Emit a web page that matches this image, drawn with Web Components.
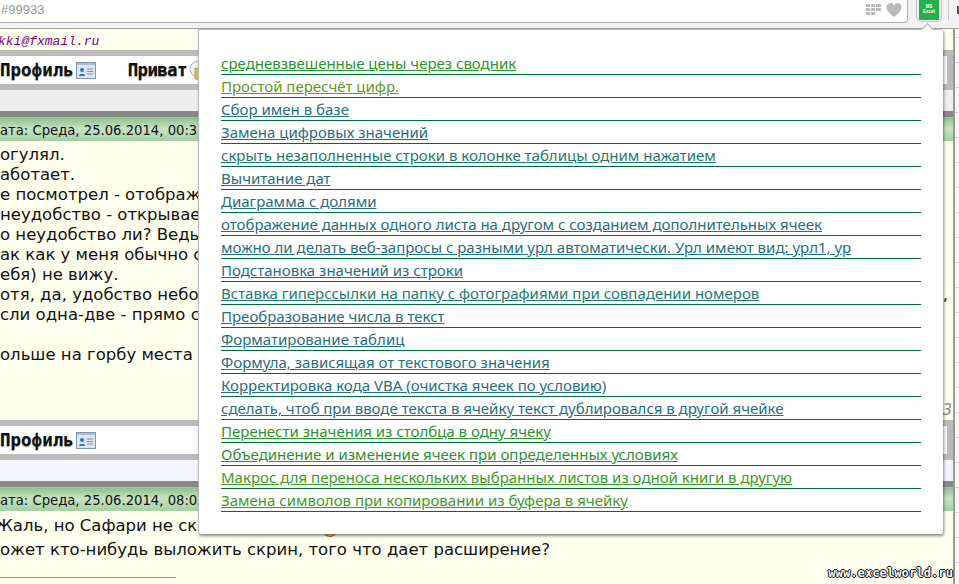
<!DOCTYPE html>
<html>
<head>
<meta charset="utf-8">
<style>
html, body { margin: 0; padding: 0; height: 100%; overflow: hidden; background: #ffffee; }
body { font-family: "DejaVu Sans", sans-serif; position: relative; width: 959px; height: 584px; }
</style>
</head>
<body>
<browser-bar></browser-bar>
<forum-page>
    <span slot="mail">kki@fxmail.ru</span>
    <forum-post date="ата: Среда, 25.06.2014, 00:37" tint="#eeeeee" priv body-height="279" pad="4" line="20">
        <post-line>огулял.</post-line>
        <post-line>аботает.</post-line>
        <post-line>е посмотрел - отображ</post-line>
        <post-line>неудобство - открывает</post-line>
        <post-line>о неудобство ли? Ведь</post-line>
        <post-line>ак как у меня обычно с</post-line>
        <post-line>ебя) не вижу.</post-line>
        <post-line tail=",">отя, да, удобство неболь</post-line>
        <post-line>сли одна-две - прямо с</post-line>
        <post-line>&nbsp;</post-line>
        <post-line>ольше на горбу места</post-line>
        <post-note>13</post-note>
    </forum-post>
    <forum-post date="ата: Среда, 25.06.2014, 08:02" tint="#f3f6fc" body-height="80" pad="3" line="24">
        <post-line style="margin-left:-5px">Жаль, но Сафари не ска</post-line>
        <post-line>ожет кто-нибудь выложить скрин, того что дает расширение?</post-line>
        <post-rule></post-rule>
    </forum-post>
</forum-page>
<post-smiley></post-smiley>
<popup-list>
    <a style="color:#2b9430">средневзвешенные цены через сводник</a>
    <a style="color:#5f9a20">Простой пересчёт цифр.</a>
    <a style="color:#256f80">Сбор имен в базе</a>
    <a style="color:#256f80">Замена цифровых значений</a>
    <a style="color:#1f7a70">скрыть незаполненные строки в колонке таблицы одним нажатием</a>
    <a style="color:#256f80">Вычитание дат</a>
    <a style="color:#256f80">Диаграмма с долями</a>
    <a style="color:#256f80">отображение данных одного листа на другом с созданием дополнительных ячеек</a>
    <a style="color:#256f80">можно ли делать веб-запросы с разными урл автоматически. Урл имеют вид: урл1, ур</a>
    <a style="color:#256f80">Подстановка значений из строки</a>
    <a style="color:#1f7a70">Вставка гиперссылки на папку с фотографиями при совпадении номеров</a>
    <a style="color:#256f80">Преобразование числа в текст</a>
    <a style="color:#256f80">Форматирование таблиц</a>
    <a style="color:#256f80">Формула, зависящая от текстового значения</a>
    <a style="color:#256f80">Корректировка кода VBA (очистка ячеек по условию)</a>
    <a style="color:#256f80">сделать, чтоб при вводе текста в ячейку текст дублировался в другой ячейке</a>
    <a style="color:#2b9430">Перенести значения из столбца в одну ячеку</a>
    <a style="color:#2f9030">Объединение и изменение ячеек при определенных условиях</a>
    <a style="color:#3f9a25">Макрос для переноса нескольких выбранных листов из одной книги в другую</a>
    <a style="color:#3f9a25">Замена символов при копировании из буфера в ячейку</a>
</popup-list>
<water-mark>www.excelworld.ru</water-mark>
<script>
class BrowserBar extends HTMLElement {
    constructor() {
        super();
        this.attachShadow({ mode: "open" });
        this.shadowRoot.innerHTML = `
            <style>
                :host { display: flex; height: 29px; background: #f2f2f2; box-sizing: border-box; border-bottom: 1px solid #a0a0a0; }
                .url {
                    width: 908px; height: 23px; background: #fff; box-sizing: border-box;
                    border: 1px solid #b0b0b0; border-width: 0 1px 1px 0; border-bottom-right-radius: 4px;
                    display: flex; align-items: center; padding: 0 5px 3px 1px; gap: 5px;
                    font: 13px "Liberation Sans", sans-serif; color: #999;
                }
                .addr { flex: 1; }
                .ext { margin-left: 8px; width: 26px; height: 22px; box-sizing: border-box; border: 1px solid #c4c4c4; border-top: 0; border-radius: 0 0 5px 5px; padding: 0 2px 1px; }
                .tile { background: #22b14c; height: 20px; color: #fff; font: bold 4.500px/5px "Liberation Sans", sans-serif; text-align: center; padding-top: 4px; box-sizing: border-box; }
                .sep { width: 1px; height: 20px; margin-left: 6px; background: #ccc; }
                .edge { width: 2px; height: 8px; margin: 6px 0 0 8px; background: #555; }
            </style>
            <div class="url">
                <span class="addr">#99933</span>
                <svg width="15" height="12" viewBox="0 0 15 12" fill="#bbb"><path d="M0 0h4v3H0zM5 0h4v3H5zM10 0h5v3h-5zM0 4h4v3H0zM5 4h4v3H5zM10 4h5v3h-5zM0 8h4v3H0zM5 8h4v3H5z"/></svg>
                <svg width="16" height="14" viewBox="0 0 16 15" fill="#bbb"><path d="M8 15C3 11 0 8 0 4.500A4.200 4.200 0 0 1 8 2.500 4.200 4.200 0 0 1 16 4.500C16 8 13 11 8 15z"/></svg>
            </div>
            <div class="ext"><div class="tile">MS<br>Excel</div></div>
            <div class="sep"></div>
            <div class="edge"></div>
        `;
    }
}

class ForumPage extends HTMLElement {
    constructor() {
        super();
        this.attachShadow({ mode: "open" });
        this.shadowRoot.innerHTML = `
            <style>
                :host { display: flex; height: 555px; overflow: hidden; }
                .main { width: 953px; flex: none; overflow: hidden; border-right: 2px solid #999; }
                .ticks { flex: 1; background: repeating-linear-gradient(#f7f7f7 0 8px, #d8d8d8 8px 9px, #f7f7f7 9px 25px); }
                .mail { height: 21px; padding-top: 6px; box-sizing: border-box; font: italic 13px/14px "Liberation Mono", monospace; color: #800080; text-indent: -2px; }
            </style>
            <div class="main">
                <div class="mail"><slot name="mail"></slot></div>
                <slot></slot>
            </div>
            <div class="ticks"></div>
        `;
    }
}

const CARD_ICON = `<svg width="20" height="17" viewBox="0 0 20 17"><rect x=".5" y=".5" width="19" height="16" fill="#dde6f0" stroke="#8096b0"/><rect x="1" y="1" width="18" height="2" fill="#a9bcd4"/><circle cx="6" cy="8" r="2" fill="#3b6fb5"/><path d="M3 14c0-3 6-3 6 0z" fill="#3b6fb5"/><path d="M11 7h6M11 9.500h6M11 12h6" stroke="#7f8fa5"/></svg>`;
const MAIL_ICON = `<svg width="19" height="20" viewBox="0 0 19 20"><circle cx="9" cy="9" r="8" fill="#eef2f5" stroke="#a9b2b8"/><path d="M6 8l10 3v8H6z" fill="#e8c35a" stroke="#b59a45"/></svg>`;

class ForumPost extends HTMLElement {
    constructor() {
        super();
        this.attachShadow({ mode: "open" });
        const date = this.getAttribute("date") || "";
        const tint = this.getAttribute("tint") || "#eee";
        const height = this.getAttribute("body-height") || "120";
        const pad = this.getAttribute("pad") || "4";
        const line = this.getAttribute("line") || "20";
        const priv = this.hasAttribute("priv") ? `<b class="priv">Приват</b>${MAIL_ICON}` : "";
        this.shadowRoot.innerHTML = `
            <style>
                :host { display: block; }
                .tools { background: #bbb; padding: 6px 6px 6px 0; }
                .row { height: 28px; background: #fff; display: flex; align-items: center; gap: 2px; font: bold 17.500px "DejaVu Sans Mono", monospace; color: #111; text-shadow: 0 1px 1px #999; }
                .priv { margin-left: 30px; letter-spacing: -.7px; }
                .tint { height: 21px; background: ${tint}; border-bottom: 6px solid #888; }
                .date { height: 24px; background: linear-gradient(#8fc08f, #c6e3c2 45%, #a4cfa4); font: 13.200px/25px "DejaVu Sans", sans-serif; color: #111; box-sizing: border-box; border-top: 1px solid #9bc59b; white-space: nowrap; overflow: hidden; }
                .body { height: ${height}px; box-sizing: border-box; padding-top: ${pad}px; font: 16.500px/${line}px "DejaVu Sans", sans-serif; color: #111; white-space: nowrap; }
            </style>
            <div class="tools"><div class="row"><b>Профиль</b>${CARD_ICON}${priv}</div></div>
            <div class="tint"></div>
            <div class="date">${date}</div>
            <div class="body"><slot></slot></div>
        `;
    }
}

class PostLine extends HTMLElement {
    constructor() {
        super();
        this.attachShadow({ mode: "open" });
        const tail = this.getAttribute("tail") || "";
        this.shadowRoot.innerHTML = `
            <style>
                :host { display: flex; justify-content: space-between; padding-right: 5px; }
            </style>
            <span><slot></slot></span><span>${tail}</span>
        `;
    }
}

class PostNote extends HTMLElement {
    constructor() {
        super();
        this.attachShadow({ mode: "open" });
        this.shadowRoot.innerHTML = `
            <style>
                :host { display: block; margin-top: 35px; padding-right: 1px; text-align: right; font: italic 15px/20px "DejaVu Sans", sans-serif; color: #888; }
            </style>
            <slot></slot>
        `;
    }
}

class PostRule extends HTMLElement {
    constructor() {
        super();
        this.attachShadow({ mode: "open" });
        this.shadowRoot.innerHTML = `
            <style>
                :host { display: block; width: 176px; margin-top: 15px; height: 1px; background: #999; }
            </style>
        `;
    }
}

// smiley of the second post, mostly hidden under the popup
class PostSmiley extends HTMLElement {
    constructor() {
        super();
        this.attachShadow({ mode: "open" });
        this.shadowRoot.innerHTML = `
            <style>
                :host { display: block; position: absolute; left: 322px; top: 521px; width: 16px; height: 16px; box-sizing: border-box; border-radius: 50%; background: #f0c850; border: 1px solid #8a6a20; }
            </style>
        `;
    }
}

class PopupList extends HTMLElement {
    constructor() {
        super();
        this.attachShadow({ mode: "open" });
        this.shadowRoot.innerHTML = `
            <style>
                :host { display: block; position: absolute; left: 198px; top: 29px; width: 745px; height: 505px; box-sizing: border-box; background: #fff; padding: 22px 22px 0; border: solid #bbb; border-width: 1px 0 0 1px; border-radius: 2px; box-shadow: 1px 2px 3px rgba(0,0,0,.45); }
                ::slotted(a) { display: block; height: 23px; box-sizing: border-box; border-bottom: 1px solid #006a3a; font: 15px/22px "Noto Sans", sans-serif; text-decoration: underline; white-space: nowrap; overflow: hidden; }
                .nub { position: absolute; right: 11px; top: -5px; width: 8px; height: 8px; background: #fff; transform: rotate(45deg); border: solid #aaa; border-width: 1px 0 0 1px; }
            </style>
            <div class="nub"></div>
            <slot></slot>
        `;
    }
}

class WaterMark extends HTMLElement {
    constructor() {
        super();
        this.attachShadow({ mode: "open" });
        this.shadowRoot.innerHTML = `
            <style>
                :host { display: block; position: absolute; right: 6px; bottom: 4px; font: bold 12.200px "DejaVu Sans Mono", monospace; color: #fff; text-shadow: 1px 0 #000, -1px 0 #000, 0 1px #000, 0 -1px #000; }
            </style>
            <slot></slot>
        `;
    }
}

customElements.define("browser-bar", BrowserBar);
customElements.define("forum-page", ForumPage);
customElements.define("forum-post", ForumPost);
customElements.define("post-line", PostLine);
customElements.define("post-note", PostNote);
customElements.define("post-rule", PostRule);
customElements.define("post-smiley", PostSmiley);
customElements.define("popup-list", PopupList);
customElements.define("water-mark", WaterMark);
</script>
</body>
</html>
